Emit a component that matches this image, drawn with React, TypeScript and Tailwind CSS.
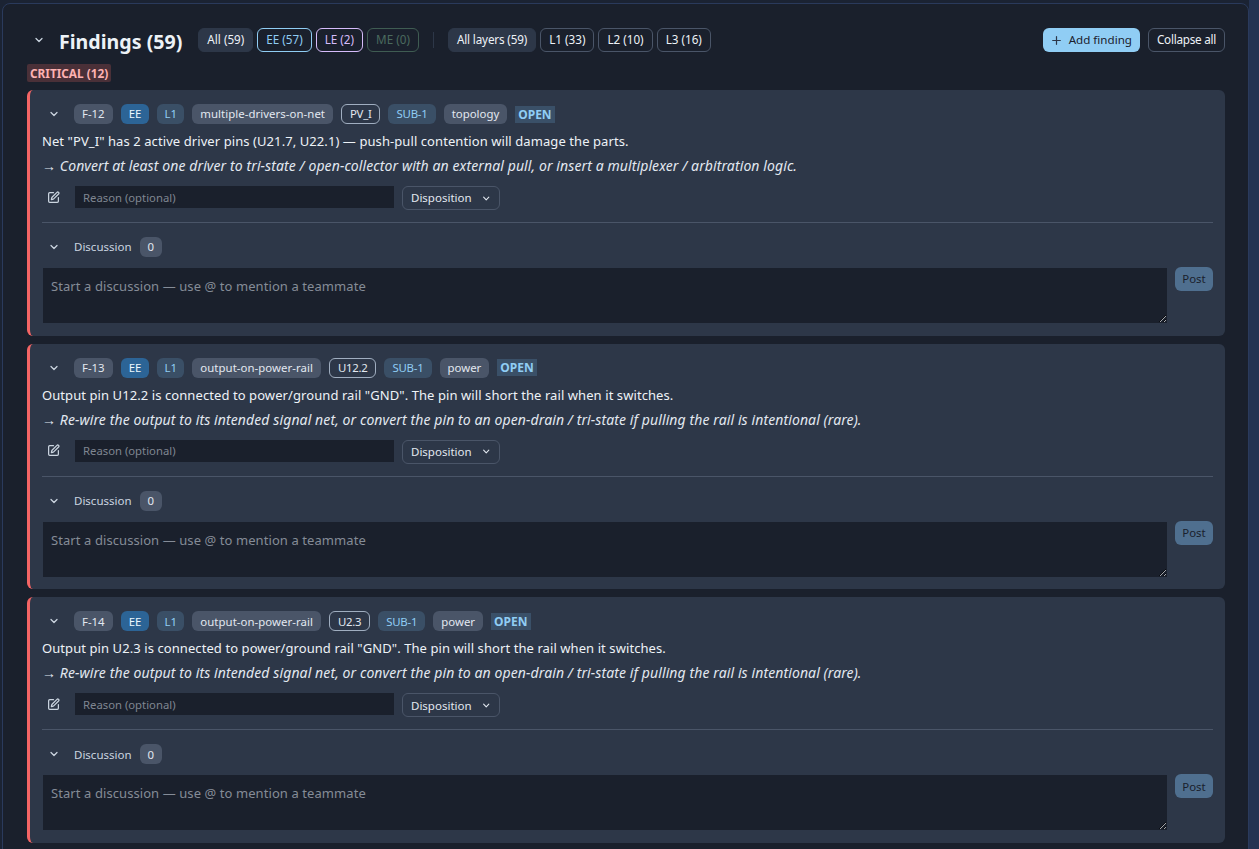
import { ChevronDown, Plus, SquarePen } from "lucide-react";

const font = "font-['Noto_Sans','Open_Sans',sans-serif]";

type Finding = {
  id: string;
  rule: string;
  net: string;
  tag: string;
  text: string;
  fix: string;
};

const findings: Finding[] = [
  {
    id: "F-12",
    rule: "multiple-drivers-on-net",
    net: "PV_I",
    tag: "topology",
    text: 'Net "PV_I" has 2 active driver pins (U21.7, U22.1) — push-pull contention will damage the parts.',
    fix: "→ Convert at least one driver to tri-state / open-collector with an external pull, or insert a multiplexer / arbitration logic.",
  },
  {
    id: "F-13",
    rule: "output-on-power-rail",
    net: "U12.2",
    tag: "power",
    text: 'Output pin U12.2 is connected to power/ground rail "GND". The pin will short the rail when it switches.',
    fix: "→ Re-wire the output to its intended signal net, or convert the pin to an open-drain / tri-state if pulling the rail is intentional (rare).",
  },
  {
    id: "F-14",
    rule: "output-on-power-rail",
    net: "U2.3",
    tag: "power",
    text: 'Output pin U2.3 is connected to power/ground rail "GND". The pin will short the rail when it switches.',
    fix: "→ Re-wire the output to its intended signal net, or convert the pin to an open-drain / tri-state if pulling the rail is intentional (rare).",
  },
];

function Pill({ className, children }: { className: string; children: React.ReactNode }) {
  return (
    <span className={`flex h-5 items-center justify-center rounded-[6px] px-2 text-[11.4px] leading-none ${className}`}>
      {children}
    </span>
  );
}

function FilterButton({ className, children }: { className: string; children: React.ReactNode }) {
  return (
    <button className={`flex h-6 items-center rounded-[6px] border px-2 text-[11.7px] leading-none ${className}`}>
      {children}
    </button>
  );
}

function FindingCard({ finding }: { finding: Finding }) {
  return (
    <div className="rounded-[6px] border-l-[3px] border-[#f56565] bg-[#2d3748] pt-[14px] pr-3 pb-[12.67px] pl-3">
      <div className="flex items-center gap-2">
        <span className="flex w-6 justify-center">
          <ChevronDown size={12} strokeWidth={2.5} className="text-[#cbd5e0]" />
        </span>
        <Pill className="bg-[#4a5568] text-[#e2e8f0]">{finding.id}</Pill>
        <Pill className="bg-[#2c6496] text-[#ebf8ff]">EE</Pill>
        <Pill className="w-[27px] bg-[#3a4f66] text-[#90cdf4]">L1</Pill>
        <Pill className="bg-[#4a5568] tracking-[0.05px] text-[#e2e8f0]">{finding.rule}</Pill>
        <Pill className="border border-[#a0aec0] tracking-[-0.3px] text-[#e2e8f0]">{finding.net}</Pill>
        <Pill className="bg-[#3a4f66] tracking-[-0.2px] text-[#90cdf4]">SUB-1</Pill>
        <Pill className="bg-[#4a5568] text-[#e2e8f0]">{finding.tag}</Pill>
        <span className="bg-[#3a5068] px-[3px] py-px text-[12px] leading-[15px] font-bold text-[#90cdf4]">OPEN</span>
      </div>
      <p className="mt-[8px] text-[13px] leading-[18px] tracking-[0.08px] text-[#edf2f7]">{finding.text}</p>
      <p className="mt-[7px] text-[14px] leading-[18px] tracking-[0.1px] text-[#e2e8f0] italic">{finding.fix}</p>
      <div className="mt-[11px] flex items-start">
        <span className="flex h-[22px] w-[23px] items-center pl-[5px]">
          <SquarePen size={13} strokeWidth={2.25} className="text-[#cbd5e0]" />
        </span>
        <input
          placeholder="Reason (optional)"
          className="ml-[10px] h-[22px] w-[319px] bg-[#1a202c] px-2 text-[11.3px] text-[#e2e8f0] outline-none placeholder:text-[#7f8691]"
        />
        <button className="ml-2 flex h-6 w-[98px] items-center gap-[9px] rounded-[6px] border border-[#4a5568] px-2 text-[11.5px] text-[#e2e8f0]">
          Disposition
          <ChevronDown size={11} strokeWidth={2.5} />
        </button>
      </div>
      <div className="mt-3 border-t border-[#4a5568] pt-[14px]">
        <div className="flex h-5 items-center">
          <span className="flex w-6 justify-center">
            <ChevronDown size={12} strokeWidth={2.5} className="text-[#cbd5e0]" />
          </span>
          <span className="ml-2 text-[11.5px] text-[#cbd5e0]">Discussion</span>
          <Pill className="ml-2 bg-[#4a5568] text-[#e2e8f0]">0</Pill>
        </div>
        <div className="mt-[11px] flex items-start gap-2">
          <textarea
            placeholder="Start a discussion — use @ to mention a teammate"
            className="ml-px h-[55px] flex-1 bg-[#1a202c] px-2 py-[9px] text-[13px] leading-[18px] tracking-[0.08px] text-[#e2e8f0] outline-none placeholder:text-[#858c97]"
          />
          <button className="-mt-px h-6 w-[38px] rounded-[6px] bg-[#4f6f8f] text-[11.4px] text-[#1a202c]">Post</button>
        </div>
      </div>
    </div>
  );
}

export default function App() {
  return (
    <div className={`flex h-[849px] overflow-hidden bg-[#1b2333] ${font}`}>
      <div className="flex-1 pt-[3px] pl-[2px]">
        <div className="h-[900px] rounded-[8px] border border-[#2a3a5c] bg-[#1a202c] pt-[24px] pr-[23px] pl-[24px]">
          <div className="flex h-6 items-center">
            <span className="flex w-[23px] justify-center">
              <ChevronDown size={12} strokeWidth={2.5} className="text-[#cbd5e0]" />
            </span>
            <h2 className="mt-1 ml-[9px] text-[19.6px] leading-none font-bold text-[#edf2f7]">Findings (59)</h2>
            <div className="ml-4 flex gap-1">
              <FilterButton className="border-[#2d3748] bg-[#2d3748] text-[#edf2f7]">All (59)</FilterButton>
              <FilterButton className="border-[#90cdf4] text-[#90cdf4]">EE (57)</FilterButton>
              <FilterButton className="border-[#d6bcfa] text-[#d6bcfa]">LE (2)</FilterButton>
              <FilterButton className="border-[#3f5c52] text-[#4a6a5e]">ME (0)</FilterButton>
            </div>
            <span className="mx-[14px] h-4 w-px bg-[#2d3748]" />
            <div className="flex gap-1">
              <FilterButton className="border-[#2d3748] bg-[#2d3748] tracking-[-0.15px] text-[#edf2f7]">
                All layers (59)
              </FilterButton>
              <FilterButton className="border-[#4a5568] text-[#edf2f7]">L1 (33)</FilterButton>
              <FilterButton className="border-[#4a5568] text-[#edf2f7]">L2 (10)</FilterButton>
              <FilterButton className="border-[#4a5568] text-[#edf2f7]">L3 (16)</FilterButton>
            </div>
            <div className="ml-auto flex gap-2">
              <button className="flex h-6 items-center gap-[6px] rounded-[6px] bg-[#90cdf4] pr-2 pl-[7px] text-[11.6px] text-[#1a202c]">
                <Plus size={13} strokeWidth={2.25} className="text-[#2d3748]" />
                Add finding
              </button>
              <FilterButton className="border-[#4a5568] tracking-[-0.25px] text-[#edf2f7]">Collapse all</FilterButton>
            </div>
          </div>
          <div className="mt-3 flex">
            <span className="rounded-[2px] bg-[#4a3038] px-[3px] text-[11.8px] leading-[18px] font-bold text-[#feb2b2]">
              CRITICAL (12)
            </span>
          </div>
          <div className="mt-2 flex flex-col gap-2">
            {findings.map((f) => (
              <FindingCard key={f.id} finding={f} />
            ))}
          </div>
        </div>
      </div>
      <div className="w-[10px] shrink-0 bg-[#243352]" />
    </div>
  );
}
